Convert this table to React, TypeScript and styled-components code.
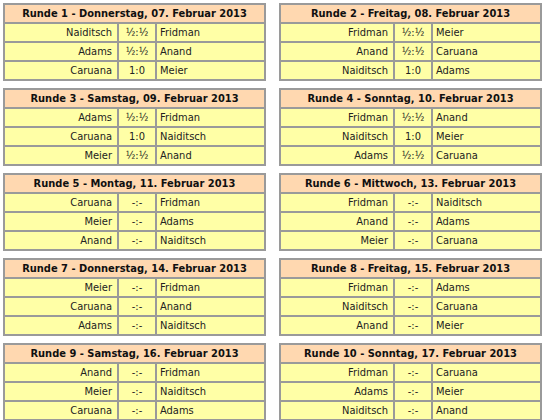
import styled, { createGlobalStyle } from "styled-components";

const GlobalStyle = createGlobalStyle`
  body {
    margin: 0;
    background: #ffffff;
    font-family: "DejaVu Sans Condensed", "DejaVu Sans", sans-serif;
    font-size: 11px;
    color: #222222;
  }
`;

type Game = [string, string, string];

interface Round {
  title: string;
  games: Game[];
}

const rounds: Round[] = [
  {
    title: "Runde 1 - Donnerstag, 07. Februar 2013",
    games: [
      ["Naiditsch", "½:½", "Fridman"],
      ["Adams", "½:½", "Anand"],
      ["Caruana", "1:0", "Meier"],
    ],
  },
  {
    title: "Runde 2 - Freitag, 08. Februar 2013",
    games: [
      ["Fridman", "½:½", "Meier"],
      ["Anand", "½:½", "Caruana"],
      ["Naiditsch", "1:0", "Adams"],
    ],
  },
  {
    title: "Runde 3 - Samstag, 09. Februar 2013",
    games: [
      ["Adams", "½:½", "Fridman"],
      ["Caruana", "1:0", "Naiditsch"],
      ["Meier", "½:½", "Anand"],
    ],
  },
  {
    title: "Runde 4 - Sonntag, 10. Februar 2013",
    games: [
      ["Fridman", "½:½", "Anand"],
      ["Naiditsch", "1:0", "Meier"],
      ["Adams", "½:½", "Caruana"],
    ],
  },
  {
    title: "Runde 5 - Montag, 11. Februar 2013",
    games: [
      ["Caruana", "-:-", "Fridman"],
      ["Meier", "-:-", "Adams"],
      ["Anand", "-:-", "Naiditsch"],
    ],
  },
  {
    title: "Runde 6 - Mittwoch, 13. Februar 2013",
    games: [
      ["Fridman", "-:-", "Naiditsch"],
      ["Anand", "-:-", "Adams"],
      ["Meier", "-:-", "Caruana"],
    ],
  },
  {
    title: "Runde 7 - Donnerstag, 14. Februar 2013",
    games: [
      ["Meier", "-:-", "Fridman"],
      ["Caruana", "-:-", "Anand"],
      ["Adams", "-:-", "Naiditsch"],
    ],
  },
  {
    title: "Runde 8 - Freitag, 15. Februar 2013",
    games: [
      ["Fridman", "-:-", "Adams"],
      ["Naiditsch", "-:-", "Caruana"],
      ["Anand", "-:-", "Meier"],
    ],
  },
  {
    title: "Runde 9 - Samstag, 16. Februar 2013",
    games: [
      ["Anand", "-:-", "Fridman"],
      ["Meier", "-:-", "Naiditsch"],
      ["Caruana", "-:-", "Adams"],
    ],
  },
  {
    title: "Runde 10 - Sonntag, 17. Februar 2013",
    games: [
      ["Fridman", "-:-", "Caruana"],
      ["Adams", "-:-", "Meier"],
      ["Naiditsch", "-:-", "Anand"],
    ],
  },
];

const Page = styled.div`
  display: grid;
  grid-template-columns: 263px 263px;
  column-gap: 13px;
  row-gap: 7px;
  padding: 3px 0 0 3px;
`;

const RoundTable = styled.table`
  width: 263px;
  border-collapse: separate;
  border-spacing: 0;
  border: 1px solid #9a9a9a;
  table-layout: fixed;
`;

const HeaderCell = styled.th`
  background: #ffd8b0;
  border: 1px solid #9a9a9a;
  height: 17px;
  padding: 0;
  font-weight: bold;
  font-size: 11px;
  color: #101010;
  text-align: center;
`;

const Cell = styled.td<{ $align: "left" | "center" | "right" }>`
  background: #ffffa6;
  border: 1px solid #9a9a9a;
  height: 17px;
  padding: ${(p) => (p.$align === "right" ? "0 5px 0 2px" : p.$align === "left" ? "0 2px 0 3px" : "0")};
  text-align: ${(p) => p.$align};
  white-space: nowrap;
  color: #222222;
`;

const LeftCol = styled.col`
  width: 114px;
`;

const MidCol = styled.col`
  width: 38px;
`;

function RoundBox({ round }: { round: Round }) {
  return (
    <RoundTable>
      <colgroup>
        <LeftCol />
        <MidCol />
        <col />
      </colgroup>
      <thead>
        <tr>
          <HeaderCell colSpan={3}>{round.title}</HeaderCell>
        </tr>
      </thead>
      <tbody>
        {round.games.map((g, i) => (
          <tr key={i}>
            <Cell $align="right">{g[0]}</Cell>
            <Cell $align="center">{g[1]}</Cell>
            <Cell $align="left">{g[2]}</Cell>
          </tr>
        ))}
      </tbody>
    </RoundTable>
  );
}

export default function App() {
  return (
    <>
      <GlobalStyle />
      <Page>
        {rounds.map((r) => (
          <RoundBox key={r.title} round={r} />
        ))}
      </Page>
    </>
  );
}
